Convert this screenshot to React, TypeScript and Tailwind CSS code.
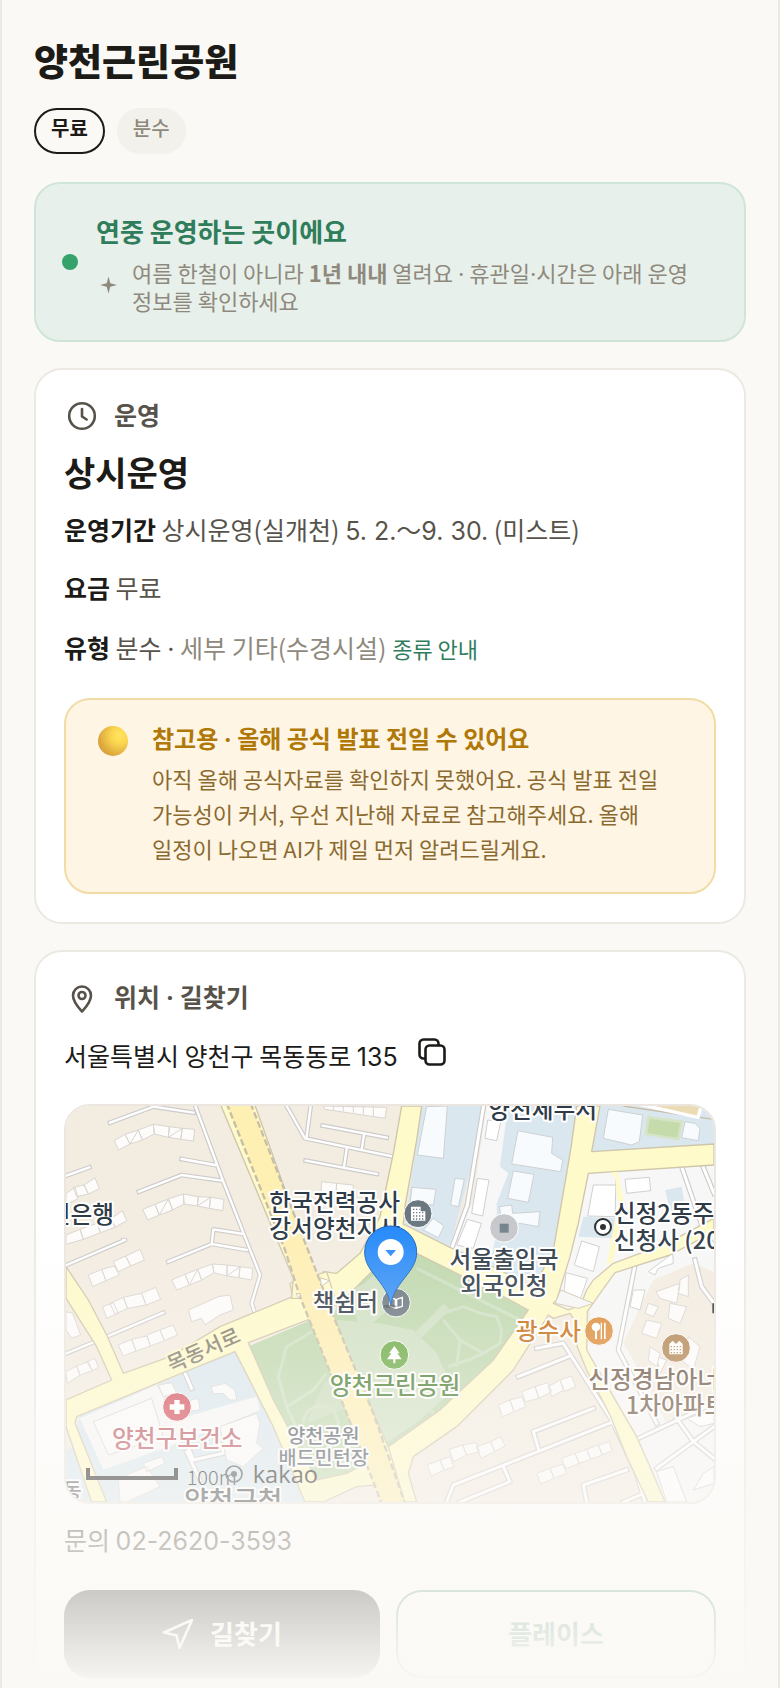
import React from "react";

const notice = ["아직 올해 공식자료를 확인하지 못했어요. 공식 발표 전일", "가능성이 커서, 우선 지난해 자료로 참고해주세요. 올해", "일정이 나오면 AI가 제일 먼저 알려드릴게요."];

function ClockIcon() {
  return (
    <svg aria-hidden="true" viewBox="0 0 36 36" className="h-9 w-9 fill-none stroke-current stroke-[2.6]" strokeLinecap="round" strokeLinejoin="round">
      <circle cx="18" cy="18" r="12.8" />
      <path d="M18 11v7.5l4.6 3" />
    </svg>
  );
}

function PinIcon() {
  return (
    <svg aria-hidden="true" viewBox="0 0 36 36" className="h-9 w-9 fill-none stroke-current stroke-[2.6]" strokeLinecap="round" strokeLinejoin="round">
      <path d="M18 31.500c-3-3.400-9-9.500-9-16a9 9 0 0 1 18 0c0 6.500-6 12.600-9 16Z" />
      <circle cx="18" cy="15.500" r="3.500" />
    </svg>
  );
}

function CopyIcon() {
  return (
    <svg aria-hidden="true" viewBox="0 0 28 28" className="h-7 w-7 fill-none stroke-current stroke-[2.6]" strokeLinecap="round" strokeLinejoin="round">
      <rect x="7.500" y="7.500" width="19" height="19" rx="4" />
      <path d="M7 20.500H5.500a4 4 0 0 1-4-4v-11a4 4 0 0 1 4-4h11a4 4 0 0 1 4 4V7" />
    </svg>
  );
}

function Dot() {
  return <span className="font-[Inter,sans-serif] leading-none">·</span>;
}

function CardHeader({ icon, children }: { icon: React.ReactNode; children: React.ReactNode }) {
  return (
    <h2 className="flex h-9 items-center gap-[14px] text-[25px] leading-8 font-bold text-[#57534b]">
      {icon}
      <span className="pb-1">{children}</span>
    </h2>
  );
}

function Streets({ paths, w = 14 }: { paths: string[]; w?: number }) {
  const d = paths.join("");
  return (
    <g fill="none" strokeLinejoin="round">
      <path d={d} stroke="#cdcccb" strokeWidth={w} strokeLinecap="square" />
      <path d={d} stroke="#ffffff" strokeWidth={w - 7} strokeLinecap="square" />
    </g>
  );
}

function Buildings({ d, fill = "#fdfcfb", stroke = "#d9d5cf" }: { d: string; fill?: string; stroke?: string }) {
  return <path d={d} fill={fill} stroke={stroke} strokeWidth="3" strokeLinejoin="round" />;
}

const roadShapes = [
  // north-south avenue and its eastern branch
  "M1025 48H1085L1070 150L1035 350L1030 402L1170 472L1320 540L1400 585L1438 560L1480 480L1520 250L1535 160L1550 48H1620L1595 185L1962 162V225L1585 250L1555 400L1530 500L1490 630L1480 640L1525 660L1562 645L1580 600L1600 570L1660 520L1820 460L1962 385V425L1830 495L1665 548L1620 610L1582 665L1580 780L1660 920L1730 1040L1770 1130L1815 1236H1765L1700 1100L1650 975L1580 840L1552 770L1550 700L1530 670L1480 685L1465 675L1430 730L1360 840L1190 1010L1060 1100L1045 1150L1070 1236H1000L985 1070L1140 960L1300 810L1405 660L1350 630L1070 490L940 540L880 600L830 650L790 600V545L830 550L900 490L960 380L1000 190Z",
  // street crossing to the west
  "M18 930L155 870L110 770L18 625V530L85 630L140 735L190 850L330 800L480 710L698 620L690 580L800 545L830 640L755 685L565 758L640 930L770 1170L860 1150L960 1100L1000 1180L890 1190L790 1236H735L640 1010L525 785L340 860L50 980L45 1000L140 1236H95L18 1010Z",
];

function ParkMap() {
  return (
    <svg role="img" aria-label="양천근린공원 주변 지도" viewBox="18 48 1944 1188" preserveAspectRatio="xMidYMid slice" className="block h-full w-full">
      <defs>
        <linearGradient id="pin" x1="0" y1="0" x2="0" y2="1">
          <stop offset="0" stopColor="#2389fa" />
          <stop offset="1" stopColor="#3b93f5" />
        </linearGradient>
      </defs>
      <rect x="0" y="0" width="2000" height="1300" fill="#f3ece1" />

      {/* civic blocks */}
      <path d="M1085 40H1270L1255 150L1170 472L1035 402ZM1345 40H1555L1480 480L1440 570L1380 570L1190 475L1260 330L1280 250Z" fill="#dae7ef" />
      <path d="M1280 40H1345L1320 230L1345 250L1310 340V430L1290 520L1180 470L1240 330Z" fill="#f7f7f7" />
      <path d="M1615 40H1970V165L1595 185Z" fill="#dae7ef" />
      <path d="M1690 48L1960 88" stroke="#c9bda9" strokeWidth="4" />
      <path d="M1725 40H1926L1914 82Z" fill="#ecdcb6" stroke="#fff" strokeWidth="10" />
      <path d="M1585 250L1970 225V1250H1815L1665 920L1582 780L1590 665L1480 645Z" fill="#f7f7f7" />
      <path d="M1570 380L1665 385L1655 445L1555 440ZM1815 300L1865 290L1880 380L1830 360Z" fill="#dae7ef" />
      <path d="M1780 570L1900 520L1962 545V990L1900 960L1825 1010L1770 900L1690 760L1745 640Z" fill="#f3ece1" />
      <path d="M290 885L525 785L640 1010L735 1236H140L50 1010L60 975Z" fill="#dae7ef" />
      <path d="M60 985L290 885L345 990L590 920L600 960L380 1050L130 1140Z" fill="#f7f7f7" />
      <path d="M18 1080L45 1070L95 1236H18Z" fill="#dae7ef" />

      {/* park */}
      <path d="M563 770L765 685L810 760L870 970L990 1150L740 1200L690 1110L640 960Z" fill="#bfd8ae" />
      <path d="M880 600L940 540L1070 490L1350 630L1405 660L1300 810L1140 960L980 1070L870 970L800 740L830 650Z" fill="#bfd8ae" />
      <path d="M830 690L960 700L1060 720L1130 790L1180 900L1080 990L980 1060L900 900ZM870 600L960 560L1010 640L900 730Z" fill="#d0e0c3" />
      <path d="M740 1000L790 880L840 840L870 950Z" fill="#cadcbc" />
      <g fill="none" stroke="#cfe0c3" strokeWidth="9">
        <path d="M1070 535L1400 700M1085 730L1150 670L1210 650L1260 670L1310 680L1325 720L1320 760L1270 790L1200 750L1150 690M1200 750L1190 830M1270 790L1225 810L1165 830M765 720L680 770L655 860L680 950L760 900L800 850M680 950L740 1080M1095 930L1125 980" />
        <path d="M910 590L960 545M730 1000a52 52 0 1 1 100 20" />
      </g>
      <path d="M1075 735L1160 650" stroke="#d0e0c3" strokeWidth="26" />

      {/* residential lanes */}
      <Streets paths={["M150 98L280 50L400 68", "M405 45L490 275L600 555L575 640L590 685", "M365 207L465 225", "M237 305L365 255L485 272", "M325 515L455 462L560 480", "M455 462L460 418L550 432", "M10 260L88 232", "M20 525L195 450L190 450", "M20 790L105 755L310 668", "M680 48L735 145L1000 200", "M752 48L740 140", "M788 107L980 143", "M912 135L905 178", "M860 178L852 230", "M737 212L950 252"]} />
      <Streets paths={["M1272 40L1222 345L1175 475", "M1720 1130L1655 990L1510 760L1430 775", "M1375 860L1525 800", "M1660 995L1180 1185L1160 1236", "M1600 955L1420 1025L1435 1075", "M1330 1130L1350 1175L1200 1236", "M1700 1140L1570 1185L1580 1236", "M1720 1120L1755 1236", "M1765 1205L1690 1236"]} w={16} />
      <Streets paths={["M1865 230L1930 420L1962 470", "M1925 220L1962 310", "M1725 525L1675 780L1790 1000", "M1735 1045L1960 940", "M1790 1135L1900 1055L1962 1010", "M1850 985L1900 1055L1962 1105", "M1905 510L1925 590L1962 640", "M375 850L395 895", "M380 1060L400 1110L490 1090L485 1065", "M380 1085L420 1170"]} w={16} />

      {/* houses */}
      <Buildings d="M163 152L195 133L210 162L175 180ZM195 133L235 120L247 150L210 162ZM235 120L280 103L283 132L247 150ZM280 103L328 110L325 142L283 132ZM328 110L367 115L362 148L325 142ZM367 115L404 118L400 153L362 148ZM210 162L235 120M325 142L367 115" />
      <Buildings d="M248 358L285 343L298 375L263 390ZM285 343L325 327L338 360L298 375ZM325 327L370 312L372 342L338 360ZM370 312L415 320L412 348L372 342ZM415 320L452 322L448 355L412 348ZM452 322L492 328L488 362L448 355ZM298 375L325 327M412 348L452 322" />
      <Buildings d="M335 570L375 553L388 585L350 600ZM375 553L413 538L425 570L388 585ZM413 538L457 522L462 548L425 570ZM457 522L502 525L500 558L462 548ZM502 525L540 530L537 563L500 558ZM540 530L578 535L575 570L537 563ZM388 585L413 538M500 558L540 530" />
      <Buildings d="M18 310L45 292L55 325L18 345ZM40 292L72 285L85 312L50 320ZM72 285L105 264L118 296L85 312ZM18 435L60 418L70 448L18 463ZM60 418L110 400L122 428L70 448ZM110 400L155 385L165 412L122 428ZM155 385L187 362L200 392L165 412Z" />
      <Buildings d="M85 555L125 538L138 572L98 590ZM125 538L163 528L178 555L138 572ZM160 515L197 498L212 528L175 545ZM197 498L240 478L253 510L212 528ZM150 640L190 622L203 655L165 672ZM190 622L245 610L258 645L203 655ZM245 610L287 592L302 628L258 645ZM128 650L160 638L175 670L140 685Z" />
      <Buildings d="M175 765L215 748L228 783L190 798ZM215 748L260 738L272 768L228 783ZM260 735L300 720L313 752L272 768ZM300 720L340 705L352 735L313 752ZM18 665L38 670L62 735L35 745L18 720ZM18 845L50 828L60 855L22 880ZM50 828L85 815L97 842L60 855ZM80 815L105 805L115 832L97 842Z" />
      <Buildings d="M385 660L430 640L475 620L510 615L520 660L480 675L435 705L425 685L395 695Z" />
      <Buildings d="M790 48L980 52L975 85L795 58ZM820 48V60M850 48V64M880 48V68M910 48V73M940 48V78M785 275L830 280L828 310L783 305ZM830 280L880 285L878 315L828 310Z" />
      <Buildings d="M1315 945L1350 930L1362 965L1327 980ZM1350 930L1385 920L1397 950L1362 965ZM1385 905L1425 890L1437 925L1397 935ZM1425 890L1463 878L1475 905L1437 925ZM1465 890L1500 870L1512 900L1475 920ZM1500 870L1535 858L1547 890L1512 905Z" />
      <Buildings d="M1102 1125L1140 1110L1152 1140L1114 1158ZM1140 1110L1170 1100L1182 1130L1152 1140ZM1168 1078L1208 1065L1220 1095L1180 1115ZM1208 1065L1248 1058L1258 1085L1220 1095ZM1250 1070L1292 1055L1304 1085L1263 1105ZM1292 1055L1322 1040L1335 1068L1304 1085ZM1430 1150L1470 1135L1482 1165L1442 1182ZM1470 1135L1508 1122L1520 1150L1482 1165ZM1505 1105L1545 1090L1557 1120L1518 1136ZM1545 1090L1580 1078L1592 1108L1557 1120ZM1580 1078L1615 1065L1627 1095L1592 1108ZM1615 1065L1648 1055L1656 1082L1627 1095Z" />
      <Buildings fill="#f8fbfd" stroke="#cdd1d4" d="M1100 50L1162 48L1150 205L1072 195ZM1056 292L1128 298L1120 345L1050 340ZM1185 265L1213 268L1195 350L1172 345ZM1120 385L1152 408L1135 443L1090 420ZM1374 122L1478 142L1475 190L1508 210L1502 245L1355 222ZM1360 243L1422 253L1405 337L1343 325ZM1318 350L1355 345L1358 370L1440 365L1435 410L1380 400L1330 420ZM1645 58L1748 75L1738 155L1715 165L1630 145ZM1875 95L1905 100L1920 115L1915 152L1865 143Z" />
      <Buildings fill="#fff" stroke="#cfcfcf" d="M1283 90L1322 95L1310 152L1275 145ZM1252 265L1287 270L1268 378L1235 370ZM1222 388L1264 400L1240 475L1190 465ZM1600 285L1668 285L1668 270L1665 380L1583 378ZM1695 268L1768 262L1772 302L1700 310ZM1565 453L1618 470L1600 545L1543 525ZM1518 548L1582 565L1560 630L1510 625ZM1765 545L1838 490L1840 520L1795 535L1785 555ZM1790 800L1820 810L1800 850ZM1720 600L1755 600L1740 660L1710 650ZM1790 1145L1840 1130L1880 1236H1820ZM1930 1150L1962 1130V1180L1900 1200ZM1880 985L1962 960V1000L1920 1010Z" />
      <Buildings d="M1788 605L1860 580L1850 640L1800 625ZM1860 570L1885 555V620L1855 610ZM1765 640L1795 650L1780 680L1755 670ZM1830 640L1880 650L1860 700L1825 685ZM1760 690L1805 700L1790 745L1745 730ZM1770 770L1800 790L1790 830L1765 810ZM1885 740L1920 770L1900 840L1870 815Z" />
      <Buildings fill="#fbfbfb" stroke="#d6d6d4" d="M100 995L275 925L310 1040L145 1095ZM295 885L335 878L350 910L310 920ZM452 890L495 880L525 900L530 930L510 930L490 910L460 912ZM355 940L415 925L420 960L370 965ZM480 1010L590 970L600 1000L590 1060L610 1075L550 1130L500 1110ZM250 1120L305 1100L315 1120L260 1145ZM175 1165L260 1130L300 1190L200 1236H180Z" />
      <path d="M1765 82L1865 95L1855 148L1758 132Z" fill="#c5dbac" stroke="#d6e4c6" strokeWidth="8" />

      {/* yellow roads */}
      <g fill="#fefac9" stroke="#cfc5ab" strokeWidth="4" strokeLinejoin="round">
        {roadShapes.map((d) => <path key={d} d={d} />)}
        <path d="M1672 245L1693 335L1660 515L1640 525L1655 440L1675 350L1665 262L1650 248Z" stroke="none" />
      </g>
      <path d="M1485 640L1502 600L1600 640L1555 655Z" fill="#f7f7f7" stroke="#cfc5ab" strokeWidth="3" />
      <path d="M480 40L700 565L695 625L730 625L775 700L870 970L975 1240H1035L985 1070L940 970L815 690L790 600L750 510L583 40Z" fill="#fefac9" stroke="#cfc5ab" strokeWidth="4" />
      <path d="M500 40H572L775 560L825 690L940 970L1035 1240H965L860 970L720 620L675 480Z" fill="#feefb3" />
      <path d="M500 40L675 480L720 620L860 970L965 1240M572 40L775 560L825 690L940 970L1035 1240" fill="none" stroke="#c6bea6" strokeWidth="7" strokeDasharray="20 9" />
      <path d="M780 563L808 572L785 588ZM708 610L722 612L716 625Z" fill="#fff" stroke="#cfc5ab" strokeWidth="3" />

      {/* labels */}
      <g fontSize="71" fontWeight="500" fill="#2f3b46" stroke="#ffffff" strokeWidth="12" strokeLinejoin="round" paintOrder="stroke">
        <text x="162" y="399" textAnchor="end">국민은행</text>
        <text x="824" y="363" textAnchor="middle">한국전력공사</text>
        <text x="824" y="441" textAnchor="middle">강서양천지사</text>
        <text x="1448" y="85" textAnchor="middle">양천세무서</text>
        <text x="1332" y="534" textAnchor="middle">서울출입국</text>
        <text x="1332" y="612" textAnchor="middle">외국인청</text>
        <text x="1661" y="397">신정2동주민센터</text>
        <text x="1661" y="476">신청사 (2026)</text>
        <text x="954" y="662" textAnchor="end">책쉼터</text>
        <text x="1563" y="750" textAnchor="end" fill="#c56a0c">광수사</text>
        <text x="1585" y="893" fill="#67513f">신정경남아너스빌</text>
        <text x="1697" y="971" fill="#67513f">1차아파트</text>
        <text x="1005" y="912" textAnchor="middle" fill="#437a2a">양천근린공원</text>
        <text x="352" y="1070" textAnchor="middle" fill="#b9525d">양천구보건소</text>
        <text x="790" y="1060" textAnchor="middle" fontSize="59" fill="#4b5660">양천공원</text>
        <text x="791" y="1124" textAnchor="middle" fontSize="59" fill="#4b5660">배드민턴장</text>
        <text x="520" y="1260" textAnchor="middle" fontSize="80" fill="#3a3f43">양천구청</text>
        <text x="8" y="1224" fontSize="62" fill="#5a5a58">동</text>
        <text transform="translate(440 800) rotate(-24)" textAnchor="middle" fontSize="63" fill="#7d786c" stroke="#fefac9">목동서로</text>
      </g>

      {/* place markers */}
      <g stroke="#ffffff" strokeWidth="3">
        <circle cx="1074" cy="371" r="42" fill="#6b7880" />
        <circle cx="1332" cy="414" r="43" fill="#c6c8cc" />
        <circle cx="1008" cy="638" r="43" fill="#6b7880" />
        <circle cx="1617" cy="723" r="43" fill="#dc8b37" />
        <circle cx="1848" cy="774" r="43" fill="#b08351" />
        <circle cx="1003" cy="795" r="43" fill="#68a940" />
        <circle cx="351" cy="951" r="43" fill="#d24b58" />
      </g>
      <path d="M1053 350H1082V364H1096V392H1053Z" fill="#fff" />
      <path d="M1059 358H1079M1059 368H1092M1059 378H1092M1059 387H1092" stroke="#6b7880" strokeWidth="4" strokeDasharray="4 5" />
      <rect x="1319" y="401" width="27" height="27" fill="#75848c" />
      <path d="M989 622L1006 628V654L989 649ZM1010 628L1027 622V649L1010 654Z" fill="none" stroke="#fff" strokeWidth="4" />
      <g fill="#fff">
        <circle cx="1608" cy="711" r="13" />
        <path d="M1605 718H1611V747H1605ZM1622 698H1626V747H1622ZM1632 698H1637V747H1632Z" />
        <path d="M1828 793V762L1838 752L1848 762L1858 752L1868 762V793Z" />
        <path d="M1003 768L1019 790H1012L1025 808H1006V820H1000V808H981L994 790H987Z" />
        <path d="M343 930H359V943H373V959H359V972H343V959H329V943H343Z" />
      </g>
      <path d="M1832 770H1866M1832 779H1866M1832 788H1866" stroke="#b08351" strokeWidth="4" strokeDasharray="4 5" />
      <circle cx="1629" cy="411" r="24" fill="#fff" stroke="#2c3033" strokeWidth="6" />
      <circle cx="1629" cy="411" r="9" fill="#2c3033" />
      <path d="M1960 640V670" stroke="#333" strokeWidth="6" />

      {/* selected place */}
      <ellipse cx="990" cy="649" rx="20" ry="5" fill="#333" opacity=".5" />
      <path d="M992 646C985 606 968 587 941 552C925 531 914 512 914 486A78 78 0 0 1 1070 486C1070 512 1059 531 1043 552C1016 587 999 606 992 646Z" fill="url(#pin)" stroke="#1c62bd" strokeWidth="3" />
      <circle cx="992" cy="486" r="39" fill="#fff" />
      <path d="M976 480H1008L992 499Z" fill="#2a8cf7" />

      {/* scale and provider */}
      <path d="M84 1134V1164H348V1134" fill="none" stroke="#1c1c1c" strokeWidth="12" />
      <text x="380" y="1185" fontSize="60" fill="#111" className="font-light">100m</text>
      <circle cx="522" cy="1152" r="24" fill="none" stroke="#454b50" strokeWidth="5" />
      <circle cx="522" cy="1152" r="9" fill="#454b50" />
      <text x="578" y="1180" fontSize="71" fill="#1c1c1c" className="font-['Open_Sans',sans-serif] font-medium">kakao</text>
    </svg>
  );
}

export default function App() {
  return (
    <main className="relative flex h-screen flex-col overflow-hidden border-x-2 border-[#ebe9e2] bg-[#fbf9f5] px-8 pt-9 font-['Noto_Sans_CJK_KR',sans-serif] text-[#1c1b18]">
      <h1 className="shrink-0 text-[37px] leading-[48px] font-black">양천근린공원</h1>
      <ul className="mt-6 flex shrink-0 gap-3 text-[20px] leading-[30px]">
        <li className="rounded-[23px] border-2 border-[#1c1b18] px-[15px] pt-[3px] pb-[9px] font-bold">무료</li>
        <li className="rounded-[23px] bg-[#f3f1ec] px-4 pt-[5px] pb-[11px] font-medium text-[#8f897d]">분수</li>
      </ul>

      <section className="mt-7 flex shrink-0 items-center gap-[18px] rounded-[26px] border-2 border-[#cfe5d8] bg-[#e7f0ea] px-[26px] py-6">
        <span className="h-4 w-4 shrink-0 rounded-full bg-[#35a26c]" />
        <div>
          <h2 className="text-[26px] leading-[46px] font-bold text-[#2f7d5b]">연중 운영하는 곳이에요</h2>
          <div className="mt-1 mb-[2px] flex gap-3 text-[#8f897d]">
            <svg aria-hidden="true" viewBox="0 0 24 24" className="mt-[15px] h-6 w-6 shrink-0 fill-current">
              <path d="M12.500 3.500L14.300 10.200L21 12L14.300 13.800L12.500 20.500L10.700 13.800L4 12L10.700 10.200Z" />
            </svg>
            <p className="text-[22px] leading-7">
              여름 한철이 아니라 <b>1년 내내</b> 열려요 <Dot /> 휴관일<Dot />시간은 아래 운영<br />정보를 확인하세요
            </p>
          </div>
        </div>
      </section>

      <section className="mt-[26px] shrink-0 rounded-[28px] border-2 border-[#ebe9e2] bg-white p-7">
        <CardHeader icon={<ClockIcon />}>운영</CardHeader>
        <p className="mt-4 text-[34px] leading-[44px] font-bold">상시운영</p>
        <div className="mt-4 flex flex-col gap-5 text-[25px] leading-[38px] text-[#57534b]">
          <p>
            <b className="text-[#1c1b18]">운영기간</b> 상시운영(실개천){" "}
            <span className="font-[Inter,'Noto_Sans_CJK_KR',sans-serif] leading-none">5. 2.〜9. 30.</span> (미스트)
          </p>
          <p><b className="text-[#1c1b18]">요금</b> 무료</p>
          <p className="leading-[42px]">
            <b className="text-[#1c1b18]">유형</b> 분수 <Dot /> <span className="text-[#8f897d]">세부 기타(수경시설)</span>{" "}
            <a href="#types" className="text-[22px] leading-none text-[#2f7d5b]">종류 안내</a>
          </p>
        </div>
        <aside className="mt-[30px] flex gap-6 rounded-[26px] border-2 border-[#f1dca5] bg-[#fff5e5] pt-[22px] pr-6 pb-[26px] pl-8">
          <span className="mt-1 h-[30px] w-[30px] shrink-0 rounded-full bg-[radial-gradient(circle_at_72%_32%,#ffe55e_0%,#fbd650_28%,#dda83d_68%,#d3914d_100%)]" />
          <div>
            <h3 className="text-[24px] leading-8 font-bold text-[#b07807]">참고용 <Dot /> 올해 공식 발표 전일 수 있어요</h3>
            <p className="mt-[7px] text-[22px] leading-[35px] text-[#8a6a2f]">
              {notice.map((line) => <span key={line} className="block">{line}</span>)}
            </p>
          </div>
        </aside>
      </section>

      <section className="mt-[26px] shrink-0 rounded-[28px] border-2 border-[#ebe9e2] bg-white p-7">
        <CardHeader icon={<PinIcon />}>위치 <Dot /> 길찾기</CardHeader>
        <div className="mt-[14px] flex items-start gap-3">
          <address className="text-[25px] leading-[50px] not-italic">
            서울특별시 양천구 목동동로 <span className="font-[Inter,sans-serif] leading-none">135</span>
          </address>
          <button type="button" aria-label="주소 복사" className="flex h-11 w-11 items-center justify-center"><CopyIcon /></button>
        </div>
        <div className="mt-6 h-[400px] overflow-hidden rounded-[26px] border-2 border-[#ebe7e0]"><ParkMap /></div>
        <p className="mt-4 text-[25px] leading-[38px] text-[#57534b]">
          문의 <span className="font-[Inter,sans-serif] leading-none">02-2620-3593</span>
        </p>
        <div className="mt-8 flex gap-4 text-[26px] leading-8 font-bold">
          <a href="#directions" className="flex h-[88px] flex-1 items-center justify-center gap-4 rounded-[26px] bg-[#1c1b18] text-white">
            <svg aria-hidden="true" viewBox="0 0 32 32" className="h-8 w-8 fill-none stroke-current stroke-[2.6]" strokeLinejoin="round">
              <path d="M30 2L2 14.500L14.500 17.500L17.500 30Z" />
            </svg>
            <span className="pb-[2px]">길찾기</span>
          </a>
          <a href="#place" className="flex h-[88px] flex-1 items-center justify-center rounded-[26px] border-2 border-[#2f7d5b]/80 text-[#2f7d5b]"><span className="pb-[2px]">플레이스</span></a>
        </div>
      </section>

      <div aria-hidden="true" className="pointer-events-none absolute inset-x-0 bottom-0 h-[468px] bg-linear-to-b from-[#fbf9f5]/0 to-[#fbf9f5]" />
    </main>
  );
}
